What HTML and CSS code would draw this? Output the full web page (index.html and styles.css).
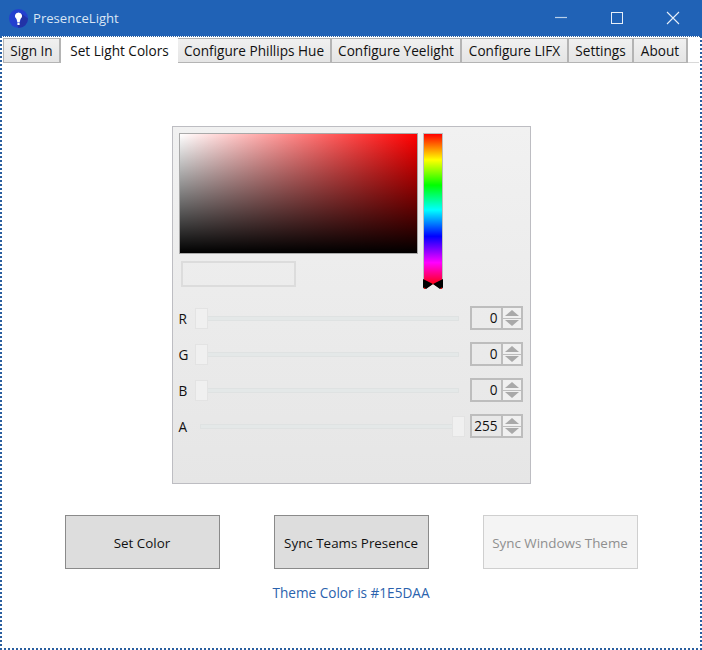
FILE: index.html
```html
<!DOCTYPE html>
<html lang="en">

<head>
    <meta charset="UTF-8">
    <title>PresenceLight</title>
    <link rel="stylesheet" href="styles.css">
</head>

<body>

    <!-- Title bar -->
    <header class="titlebar">
        <svg class="app-icon" width="19" height="19" viewBox="0 0 19 19">
            <circle cx="9.5" cy="9.5" r="9.5" fill="#2340cf"/>
            <path d="M9.5 19A9.5 9.5 0 0 0 19 9.5L13 5 11 14 8 15z" fill="#2233a6"/>
            <path d="M9.5 3.5a3.6 3.6 0 0 0-2 6.6l.9 3.4h2.2l.9-3.4a3.6 3.6 0 0 0-2-6.6z" fill="#fff"/>
            <rect x="8.4" y="14" width="2.2" height="2" fill="#fff"/>
        </svg>
        <span class="app-title">PresenceLight</span>
        <div class="window-controls">
            <svg class="control" width="56" height="36" viewBox="0 0 56 36"><path d="M22 17.5h12" stroke="#b9cfe9" stroke-width="1.2"/></svg>
            <svg class="control" width="56" height="36" viewBox="0 0 56 36"><rect x="22.5" y="12.5" width="11" height="11" fill="none" stroke="#e6eef8"/></svg>
            <svg class="control" width="56" height="36" viewBox="0 0 56 36"><path d="M22 12l12 12M34 12L22 24" stroke="#e6eef8" stroke-width="1.1"/></svg>
        </div>
    </header>

    <main class="window-body">
        <!-- Tabs -->
        <nav class="tabs">
            <div class="tab">Sign In</div>
            <div class="tab tab-active">Set Light Colors</div>
            <div class="tab">Configure Phillips Hue</div>
            <div class="tab">Configure Yeelight</div>
            <div class="tab">Configure LIFX</div>
            <div class="tab">Settings</div>
            <div class="tab">About</div>
        </nav>

        <section class="tab-content">
            <!-- Color picker -->
            <div class="picker">
                <div class="picker-top">
                    <div class="picker-left">
                        <div class="color-area"></div>
                        <div class="color-preview"></div>
                    </div>
                    <div class="hue-bar">
                        <svg class="hue-marker" width="20" height="10" viewBox="0 0 20 10">
                            <path d="M2 10L10 5l8 5z" fill="#ececec"/>
                            <path d="M0 0l10 5-7 5-1.500-1.500L0 9zM20 0L10 5l7 5 1.500-1.500L20 9z" fill="#000"/>
                        </svg>
                    </div>
                </div>

                <div class="slider-row">
                    <span class="slider-label">R</span>
                    <div class="slider"><span class="thumb"></span></div>
                    <div class="spinner">
                        <span class="spinner-value">0</span>
                        <div class="spinner-buttons">
                            <span class="spin-btn"><svg width="14" height="6" viewBox="0 0 14 6"><path d="M7 0l7 6H0z" fill="#a9a9a9"/></svg></span>
                            <span class="spin-btn"><svg width="14" height="6" viewBox="0 0 14 6"><path d="M0 0h14L7 6z" fill="#a9a9a9"/></svg></span>
                        </div>
                    </div>
                </div>
                <div class="slider-row">
                    <span class="slider-label">G</span>
                    <div class="slider"><span class="thumb"></span></div>
                    <div class="spinner">
                        <span class="spinner-value">0</span>
                        <div class="spinner-buttons">
                            <span class="spin-btn"><svg width="14" height="6" viewBox="0 0 14 6"><path d="M7 0l7 6H0z" fill="#a9a9a9"/></svg></span>
                            <span class="spin-btn"><svg width="14" height="6" viewBox="0 0 14 6"><path d="M0 0h14L7 6z" fill="#a9a9a9"/></svg></span>
                        </div>
                    </div>
                </div>
                <div class="slider-row">
                    <span class="slider-label">B</span>
                    <div class="slider"><span class="thumb"></span></div>
                    <div class="spinner">
                        <span class="spinner-value">0</span>
                        <div class="spinner-buttons">
                            <span class="spin-btn"><svg width="14" height="6" viewBox="0 0 14 6"><path d="M7 0l7 6H0z" fill="#a9a9a9"/></svg></span>
                            <span class="spin-btn"><svg width="14" height="6" viewBox="0 0 14 6"><path d="M0 0h14L7 6z" fill="#a9a9a9"/></svg></span>
                        </div>
                    </div>
                </div>
                <div class="slider-row">
                    <span class="slider-label">A</span>
                    <div class="slider"><span class="thumb thumb-max"></span></div>
                    <div class="spinner">
                        <span class="spinner-value">255</span>
                        <div class="spinner-buttons">
                            <span class="spin-btn"><svg width="14" height="6" viewBox="0 0 14 6"><path d="M7 0l7 6H0z" fill="#a9a9a9"/></svg></span>
                            <span class="spin-btn"><svg width="14" height="6" viewBox="0 0 14 6"><path d="M0 0h14L7 6z" fill="#a9a9a9"/></svg></span>
                        </div>
                    </div>
                </div>
            </div>

            <!-- Actions -->
            <div class="actions">
                <button class="action-btn">Set Color</button>
                <button class="action-btn">Sync Teams Presence</button>
                <button class="action-btn" disabled>Sync Windows Theme</button>
            </div>
            <p class="theme-color">Theme Color is #1E5DAA</p>
        </section>
    </main>

</body>

</html>
```

FILE: styles.css
```css
* {
    box-sizing: border-box;
}

body {
    margin: 0;
    width: 702px;
    height: 650px;
    overflow: hidden;
    background-color: #fff;
    font-family: "Open Sans", "Noto Sans", sans-serif;
    font-size: 13.6px;
    color: #111;
}

/* Title bar */
.titlebar {
    display: flex;
    align-items: center;
    height: 36px;
    padding-left: 9px;
    background-color: #2062b6;
}

.app-icon {
    flex-shrink: 0;
}

.app-title {
    margin-left: 5px;
    font-size: 13.1px;
    color: #d9e5f4;
}

.window-controls {
    display: flex;
    margin-left: auto;
    margin-right: 1px;
}

.control {
    display: block;
}

/* Window body */
.window-body {
    height: 614px;
    padding: 1px 1px 0;
    border: 2px dotted #2a5f9f;
    border-width: 1px 2px 2px;
}

.tabs {
    display: flex;
    align-items: flex-end;
    height: 25px;
    border-bottom: 1px solid #d9d9d9;
}

.tab {
    display: flex;
    align-items: center;
    justify-content: center;
    height: 25px;
    margin-bottom: -1px;
    border: 1px solid #b4b4b4;
    border-left-width: 0;
    border-right-width: 2px;
    background: linear-gradient(#f0f0f0, #e5e5e5);
    white-space: nowrap;
}

.tab:first-child {
    border-left-width: 1px;
}

.tab:nth-child(1) { width: 58px; }
.tab:nth-child(2) { width: 117px; }
.tab:nth-child(3) { width: 154px; }
.tab:nth-child(4) { width: 130px; }
.tab:nth-child(5) { width: 107px; }
.tab:nth-child(6) { width: 65px; }
.tab:nth-child(7) { width: 54px; }

.tab-active {
    padding-bottom: 1px;
    border: none;
    background: #fff;
}

.tab-content {
    display: flex;
    flex-direction: column;
    align-items: center;
    padding-top: 63px;
}

/* Color picker */
.picker {
    width: 359px;
    height: 358px;
    padding: 6px;
    border: 1px solid #bdbdc2;
    background: linear-gradient(#f1f1f1, #e6e6e6);
}

.picker-top {
    display: flex;
    gap: 5px;
    height: 156px;
    margin-bottom: 17px;
}

.picker-left {
    width: 239px;
}

.color-area {
    width: 239px;
    height: 121px;
    border: 1px solid #a9a9a9;
    background:
        linear-gradient(to bottom, rgba(0, 0, 0, 0), #000),
        linear-gradient(to right, #fff, #f00);
}

.color-preview {
    width: 115px;
    height: 26px;
    margin: 7px 0 0 2px;
    border: 2px solid #dcdcdc;
}

.hue-bar {
    position: relative;
    width: 20px;
    height: 156px;
    border: 1px solid #bdbdbd;
    border-bottom: none;
    background: linear-gradient(#f00 0%, #ff0 16.700%, #0f0 33%, #0ff 49%, #00f 66%, #f0f 83%, #f00 98%);
}

.hue-marker {
    position: absolute;
    left: -1px;
    bottom: 0;
    display: block;
}

/* Sliders */
.slider-row {
    display: flex;
    align-items: center;
    height: 24px;
    margin-bottom: 12px;
}

.slider-label {
    width: 21px;
    padding-top: 1px;
}

.slider {
    position: relative;
    width: 259px;
    height: 5px;
    background-color: #e4e8e8;
    border: 1px solid #dfe2e2;
}

.thumb {
    position: absolute;
    top: -9px;
    left: -6px;
    width: 13px;
    height: 21px;
    background-color: #f0f0f0;
    border: 1px solid #e3e3e3;
}

.thumb-max {
    left: 251px;
}

.spinner {
    display: flex;
    width: 53px;
    height: 24px;
    margin-left: 11px;
    border: 2px solid #bdbdbd;
}

.spinner-value {
    flex: 1;
    padding-right: 3px;
    line-height: 19px;
    text-align: right;
}

.spinner-buttons {
    display: flex;
    flex-direction: column;
    width: 20px;
    border-left: 2px solid #bdbdbd;
}

.spin-btn {
    display: flex;
    flex: 1;
    align-items: center;
    justify-content: center;
    background-color: #f0f0f0;
}

.spin-btn:first-child {
    border-bottom: 1px solid #bdbdbd;
}

/* Buttons under the picker */
.actions {
    display: flex;
    gap: 54px;
    margin-top: 31px;
}

.action-btn {
    width: 155px;
    height: 54px;
    padding: 2px 0 0;
    border: 1px solid #8a8a8a;
    background-color: #dddddd;
    font-family: inherit;
    font-size: 13.4px;
    color: #111;
}

.action-btn:disabled {
    border-color: #cfcfcf;
    background-color: #f4f4f4;
    color: #8f8f8f;
}

.theme-color {
    margin: 14px 0 0;
    color: #2a62ad;
}
```
